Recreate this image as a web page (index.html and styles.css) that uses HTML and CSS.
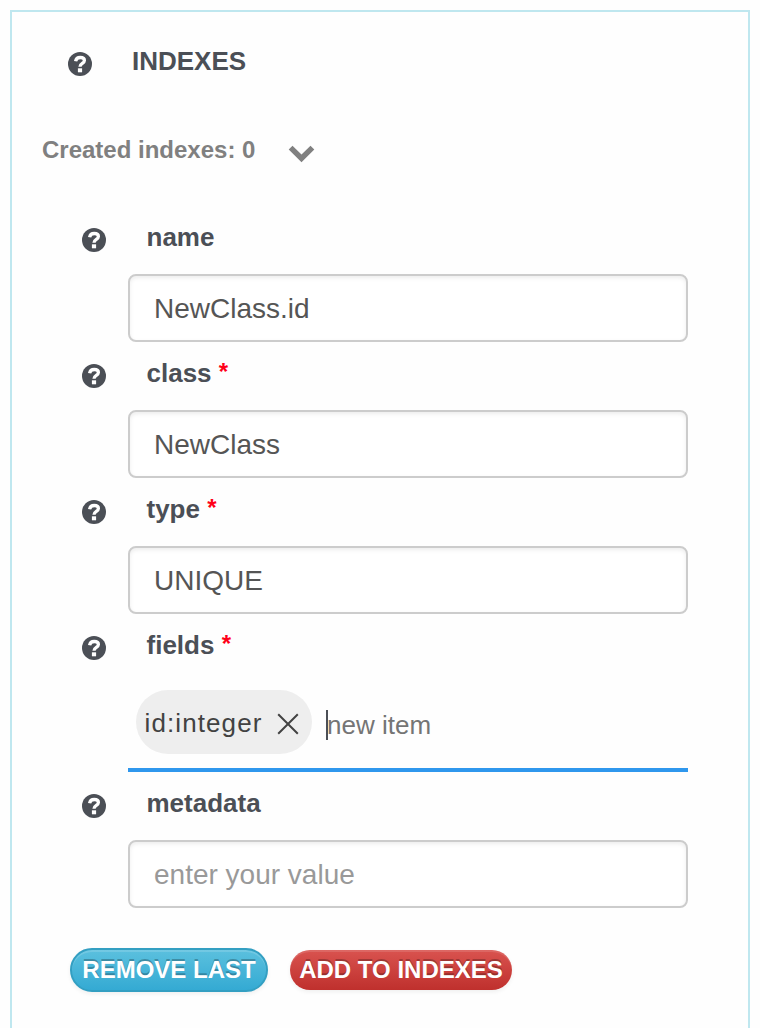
FILE: index.html
```
<!DOCTYPE html>
<html lang="en">
<head>
<meta charset="utf-8">
<title>Indexes</title>
<link rel="stylesheet" href="styles.css">
</head>
<body>
<svg class="sprite" aria-hidden="true">
  <symbol id="help" viewBox="0 0 24 24"><circle cx="12" cy="12" r="12"/><path class="help-hook" d="M7.600 9.300C8 6.700 9.800 5.500 12.200 5.500 14.800 5.500 16.400 6.700 16.400 8.500 16.400 11.500 12 11.200 12 14.700"/><path class="help-dot" d="M9.900 16.300h4.200v4H9.900z"/></symbol>
</svg>
<main class="panel">
  <header class="heading">
    <svg class="help"><use href="#help"/></svg>
    <h1 class="title">INDEXES</h1>
  </header>
  <div class="summary">
    <span>Created indexes: 0</span>
    <svg class="chevron" viewBox="0 0 26 18"><path d="M3.500 .7 12.500 9.600 21.500 .7 25.300 4.400 12.500 17.200 -.3 4.400z"/></svg>
  </div>
  <form class="form">
    <div class="field">
      <div class="caption"><svg class="help"><use href="#help"/></svg><label for="name">name</label></div>
      <input class="input" id="name" type="text" value="NewClass.id">
    </div>
    <div class="field">
      <div class="caption"><svg class="help"><use href="#help"/></svg><label for="class">class <span class="required">*</span></label></div>
      <input class="input" id="class" type="text" value="NewClass">
    </div>
    <div class="field">
      <div class="caption"><svg class="help"><use href="#help"/></svg><label for="type">type <span class="required">*</span></label></div>
      <input class="input" id="type" type="text" value="UNIQUE">
    </div>
    <div class="field">
      <div class="caption"><svg class="help"><use href="#help"/></svg><label>fields <span class="required">*</span></label></div>
      <div class="chips">
        <span class="chip">id:integer<svg class="close" viewBox="0 0 22 22"><path d="M1.200 1.200 20.800 20.800M20.800 1.200 1.200 20.800"/></svg></span>
        <span class="new-item"><span class="caret"></span>new item</span>
      </div>
    </div>
    <div class="field">
      <div class="caption"><svg class="help"><use href="#help"/></svg><label for="metadata">metadata</label></div>
      <input class="input" id="metadata" type="text" placeholder="enter your value">
    </div>
    <div class="actions">
      <button class="button button-info" type="button">REMOVE LAST</button>
      <button class="button button-danger" type="button">ADD TO INDEXES</button>
    </div>
  </form>
</main>
</body>
</html>
```
FILE: styles.css
```
* { box-sizing: border-box; }
body {
  margin: 0;
  padding: 10px 10px 0;
  height: 1028px;
  overflow: hidden;
  background: #fefefe;
  color: #4b4f56;
  font-family: "Liberation Sans", Arial, sans-serif;
}
.sprite { display: none; }
.panel {
  height: 1040px;
  border: 2px solid #bfe7ef;
}
.help {
  flex: none;
  width: 24px;
  height: 24px;
  fill: #4b4f56;
}
.help-hook {
  fill: none;
  stroke: #fff;
  stroke-width: 3.300px;
}
.help-dot { fill: #fff; }
.heading {
  display: flex;
  align-items: flex-start;
  gap: 40.500px;
  height: 108px;
  padding: 40px 0 0 55.500px;
}
.title {
  margin: -6px 0 0;
  font-size: 26px;
  line-height: 30px;
}
.summary {
  display: flex;
  align-items: flex-start;
  gap: 34px;
  height: 86px;
  padding: 17px 0 0 30px;
  color: #808080;
  font-size: 24px;
  font-weight: bold;
  line-height: 26px;
}
.chevron {
  width: 26px;
  height: 18px;
  margin-top: 8px;
  overflow: visible;
  fill: #808080;
}
.form { margin-left: 70px; }
.field { width: 606px; }
.caption {
  display: flex;
  align-items: flex-start;
  gap: 40.500px;
  height: 68px;
  font-size: 26px;
  font-weight: bold;
  line-height: 62px;
}
.caption .help { margin-top: 22px; }
.required {
  color: #ff0018;
  font-size: 24px;
  vertical-align: 2px;
  line-height: 1;
}
.input {
  display: block;
  width: 560px;
  height: 68px;
  margin: 0 0 0 46px;
  padding: 2px 24px 0;
  border: 2px solid #ccc;
  border-radius: 8px;
  background: #fff;
  box-shadow: inset 0 2px 4px rgba(0, 0, 0, .075);
  color: #555;
  font: 28px "Liberation Sans", Arial, sans-serif;
}
.input::placeholder { color: #999; opacity: 1; }
.chips {
  display: flex;
  align-items: flex-start;
  gap: 14px;
  width: 560px;
  height: 90px;
  margin-left: 46px;
  padding: 8px 8px 0;
  border-bottom: 4px solid #2f97ed;
}
.chip {
  display: flex;
  align-items: center;
  width: 176px;
  height: 64px;
  padding: 2px 13px 0 8.500px;
  border-radius: 32px;
  background: #eee;
  color: #424242;
  font-size: 26px;
  letter-spacing: 1.100px;
  line-height: 62px;
  justify-content: space-between;
}
.close {
  width: 22px;
  height: 22px;
  margin-top: 2px;
  stroke: #424242;
  stroke-width: 2;
}
.new-item {
  position: relative;
  padding-left: 1px;
  color: #757575;
  font-size: 26px;
  line-height: 70px;
}
.caret {
  position: absolute;
  top: 20px;
  left: 0;
  width: 2px;
  height: 30px;
  background: #4b4f56;
}
.actions {
  display: flex;
  align-items: center;
  gap: 22px;
  margin: 40px 0 0 -12px;
}
.button {
  padding: 0;
  border: 0;
  border-radius: 22px;
  color: #fff;
  font: bold 24px/40px "Liberation Sans", Arial, sans-serif;
  white-space: nowrap;
  text-shadow: 0 -2px 0 rgba(0, 0, 0, .25);
}
.button-info {
  width: 198px;
  height: 44px;
  border: 2px solid #339fc2;
  background: linear-gradient(#5bc0de, #34aad3);
  box-shadow: inset 0 2px 0 rgba(255, 255, 255, .15), 0 2px 4px rgba(0, 0, 0, .06);
}
.button-danger {
  width: 222px;
  height: 40px;
  background: linear-gradient(#d9534f, #bf302d);
  box-shadow: inset 0 2px 0 rgba(255, 255, 255, .12), 0 2px 4px rgba(0, 0, 0, .06);
}
```
